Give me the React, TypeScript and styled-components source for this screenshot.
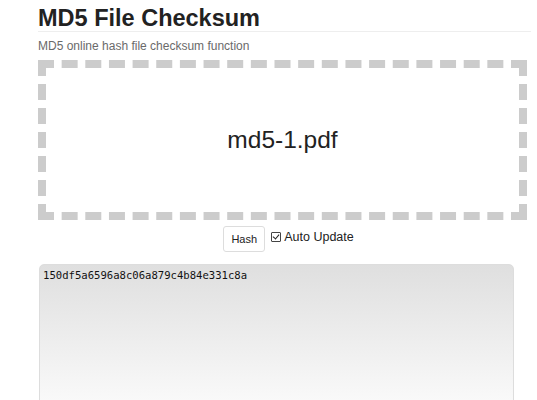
import React from "react";
import styled, { createGlobalStyle } from "styled-components";

const Global = createGlobalStyle`
  html, body { margin: 0; padding: 0; background: #fff; }
  body { font-family: "Liberation Sans", Arial, sans-serif; color: #333; }
`;

const Page = styled.div`
  width: 489px;
  margin-left: 38px;
  padding-top: 5px;
`;

const Title = styled.h1`
  margin: 0;
  font-size: 23.5px;
  line-height: 26px;
  font-weight: bold;
  color: #222;
  border-bottom: 1px solid #eee;
  margin-right: -4px;
`;

const Subtitle = styled.p`
  margin: 7px 0 0;
  font-size: 12px;
  line-height: 14px;
  color: #6a6a6a;
`;

const Drop = styled.div`
  margin-top: 7px;
  box-sizing: border-box;
  height: 160px;
  border: 8px dashed #ccc;
  display: flex;
  align-items: center;
  justify-content: center;
  font-size: 24.5px;
  color: #222;
`;

const Controls = styled.div`
  display: flex;
  justify-content: center;
  align-items: center;
  gap: 6px;
  margin-top: 6px;
  padding-left: 12px;
`;

const Button = styled.button`
  height: 26px;
  width: 42px;
  padding: 0;
  font-family: "Liberation Sans", Arial, sans-serif;
  font-size: 11px;
  color: #222;
  background: #fff;
  border: 1px solid #ddd;
  border-radius: 3px;
`;

const Label = styled.label`
  display: flex;
  align-items: center;
  gap: 3px;
  font-size: 12.5px;
  color: #222;
  margin-top: -4px;
`;

const Check = styled.input`
  appearance: none;
  position: relative;
  margin: 0;
  width: 10px;
  height: 10px;
  box-sizing: border-box;
  border: 1px solid #444;
  border-radius: 1px;
  background: #fff;
  &:checked::after {
    content: "";
    position: absolute;
    left: 2px;
    top: 0px;
    width: 3px;
    height: 5px;
    border: solid #222;
    border-width: 0 1px 1px 0;
    transform: rotate(40deg);
  }
`;

const Output = styled.textarea`
  display: block;
  box-sizing: border-box;
  margin: 12px 0 0 1px;
  width: 475px;
  height: 160px;
  padding: 4px 3px;
  resize: none;
  border: 1px solid #ddd;
  border-radius: 5px;
  background: linear-gradient(#dfdfdf, #fafafa 140px);
  font-family: "DejaVu Sans Mono", monospace;
  font-size: 10.6px;
  line-height: 13px;
  color: #111;
  outline: none;
`;

export default function App() {
  return (
    <>
      <Global />
      <Page>
        <Title>MD5 File Checksum</Title>
        <Subtitle>MD5 online hash file checksum function</Subtitle>
        <Drop>md5-1.pdf</Drop>
        <Controls>
          <Button>Hash</Button>
          <Label>
            <Check type="checkbox" defaultChecked />
            Auto Update
          </Label>
        </Controls>
        <Output readOnly value="150df5a6596a8c06a879c4b84e331c8a" />
      </Page>
    </>
  );
}
